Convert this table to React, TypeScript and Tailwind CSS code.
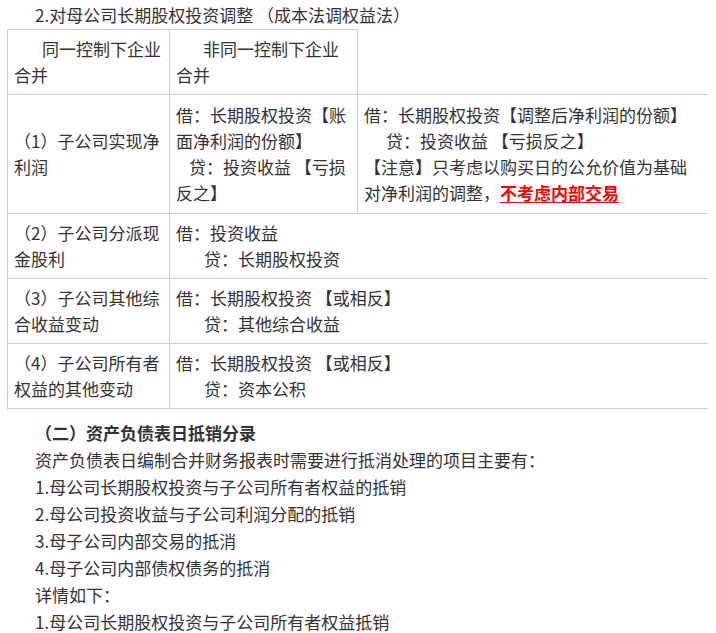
import React from 'react';

const cell = 'border border-[#cfcfcf] px-[6px] py-[6px] align-middle';

export default function App() {
  return (
    <div
      className="w-[716px] bg-white text-[17px] text-[#333] leading-[27px]"
      style={{ fontFamily: '"Noto Sans CJK SC", "Noto Sans", sans-serif' }}
    >
      <p className="pl-[35px] pt-[2px] leading-[26px] mb-[1px]">
        2.对母公司长期股权投资调整 （成本法调权益法）
      </p>

      {/* 调整分录表 */}
      <table className="ml-[7px] w-[700px] table-fixed border-collapse leading-[26px]">
        <colgroup>
          <col className="w-[162px]" />
          <col className="w-[188px]" />
          <col className="w-[350px]" />
        </colgroup>
        <tbody>
          <tr>
            <td className={cell}>
              <div className="indent-[28px]">同一控制下企业合并</div>
            </td>
            <td className={cell}>
              <div className="indent-[27px]">非同一控制下企业合并</div>
            </td>
          </tr>
          <tr>
            <td className={`${cell} py-[7px]`}>（1）子公司实现净利润</td>
            <td className={`${cell} py-[7px]`}>
              <div>借：长期股权投资【账面净利润的份额】</div>
              <div className="indent-[13px]">贷：投资收益 【亏损反之】</div>
            </td>
            <td className={`${cell} py-[7px] border-r-0`}>
              <div>借：长期股权投资【调整后净利润的份额】</div>
              <div className="indent-[22px]">贷：投资收益 【亏损反之】</div>
              <div>
                【注意】只考虑以购买日的公允价值为基础对净利润的调整，
                <span className="font-bold text-[#ff0000] underline underline-offset-2">不考虑内部交易</span>
              </div>
            </td>
          </tr>
          <tr>
            <td className={cell}>（2）子公司分派现金股利</td>
            <td className={`${cell} border-r-0`} colSpan={2}>
              <div>借：投资收益</div>
              <div className="indent-[28px]">贷：长期股权投资</div>
            </td>
          </tr>
          <tr>
            <td className={cell}>（3）子公司其他综合收益变动</td>
            <td className={`${cell} border-r-0`} colSpan={2}>
              <div>借：长期股权投资 【或相反】</div>
              <div className="indent-[28px]">贷：其他综合收益</div>
            </td>
          </tr>
          <tr>
            <td className={cell}>（4）子公司所有者权益的其他变动</td>
            <td className={`${cell} border-r-0`} colSpan={2}>
              <div>借：长期股权投资 【或相反】</div>
              <div className="indent-[28px]">贷：资本公积</div>
            </td>
          </tr>
        </tbody>
      </table>

      <div className="pl-[35px] mt-[10px]">
        <p className="font-bold">（二）资产负债表日抵销分录</p>
        <p>资产负债表日编制合并财务报表时需要进行抵消处理的项目主要有：</p>
        <p>1.母公司长期股权投资与子公司所有者权益的抵销</p>
        <p>2.母公司投资收益与子公司利润分配的抵销</p>
        <p>3.母子公司内部交易的抵消</p>
        <p>4.母子公司内部债权债务的抵消</p>
        <p>详情如下：</p>
        <p>1.母公司长期股权投资与子公司所有者权益抵销</p>
      </div>
    </div>
  );
}
